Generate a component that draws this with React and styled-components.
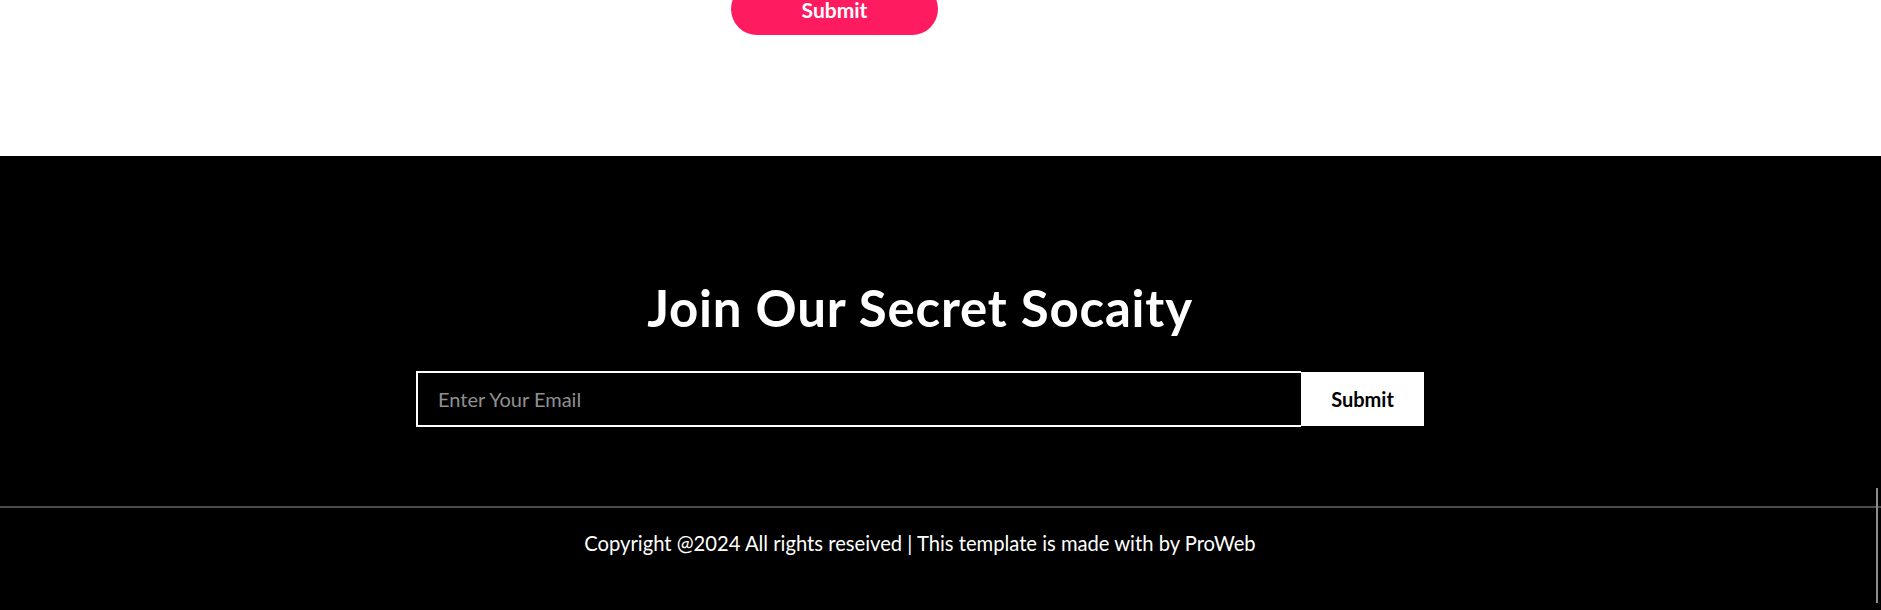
import React from "react";
import styled, { createGlobalStyle } from "styled-components";

const Global = createGlobalStyle`
  html, body {
    margin: 0;
    padding: 0;
    background: #ffffff;
    overflow: hidden;
  }
  body {
    font-family: Lato, "Open Sans", sans-serif;
  }
  * { box-sizing: border-box; }
`;

const Page = styled.div`
  position: relative;
  width: 100%;
  height: 610px;
  display: flex;
  flex-direction: column;
`;

const ContactTail = styled.section`
  height: 156px;
  background: #ffffff;
  display: flex;
  align-items: flex-start;
  padding-left: 731px;
`;

const PinkButton = styled.button`
  margin-top: -17px;
  width: 207px;
  height: 52px;
  border: none;
  border-radius: 26px;
  background: #fe1b5f;
  color: #ffffff;
  font-family: Lato, sans-serif;
  font-weight: 700;
  font-size: 21px;
  line-height: 1;
  padding: 0;
  cursor: pointer;
`;

const Footer = styled.footer`
  flex: 1;
  background: #000000;
  display: flex;
  flex-direction: column;
`;

const Newsletter = styled.div`
  padding: 122px 41px 0 0;
  display: flex;
  flex-direction: column;
  align-items: center;
`;

const Heading = styled.h2`
  margin: 0;
  color: #ffffff;
  font-family: Lato, sans-serif;
  font-weight: 700;
  font-size: 51px;
  letter-spacing: 0.8px;
  line-height: 60px;
`;

const Form = styled.form`
  margin-top: 33px;
  width: 1008px;
  height: 56px;
  display: flex;
  align-items: center;
`;

const EmailInput = styled.input`
  flex: 1;
  height: 56px;
  background: #000000;
  border: 2px solid #ffffff;
  border-right: none;
  padding: 0 0 0 20px;
  color: #ffffff;
  font-family: Lato, sans-serif;
  font-size: 20px;
  outline: none;
  &::placeholder {
    color: #909090;
  }
`;

const FormButton = styled.button`
  width: 123px;
  height: 54px;
  border: none;
  background: #ffffff;
  color: #000000;
  font-family: Lato, sans-serif;
  font-weight: 700;
  font-size: 20px;
  padding: 0;
  cursor: pointer;
`;

const Divider = styled.hr`
  margin: 79px 0 0 0;
  border: none;
  height: 2px;
  background: #4b4b4b;
`;

const Copyright = styled.p`
  margin: 0;
  padding: 22px 41px 0 0;
  text-align: center;
  color: #ffffff;
  font-family: Lato, sans-serif;
  font-size: 20.2px;
  line-height: 26px;
`;

const ScrollMark = styled.div`
  position: absolute;
  right: 3px;
  top: 488px;
  width: 2px;
  height: 115px;
  background: #8c8c8c;
`;

export default function App() {
  return (
    <>
      <Global />
      <Page>
        <ContactTail>
          <PinkButton type="button">Submit</PinkButton>
        </ContactTail>
        <Footer>
          <Newsletter>
            <Heading>Join Our Secret Socaity</Heading>
            <Form onSubmit={(e) => e.preventDefault()}>
              <EmailInput type="email" placeholder="Enter Your Email" />
              <FormButton type="submit">Submit</FormButton>
            </Form>
          </Newsletter>
          <Divider />
          <Copyright>
            Copyright @2024 All rights reseived | This template is made with by ProWeb
          </Copyright>
        </Footer>
        <ScrollMark />
      </Page>
    </>
  );
}
